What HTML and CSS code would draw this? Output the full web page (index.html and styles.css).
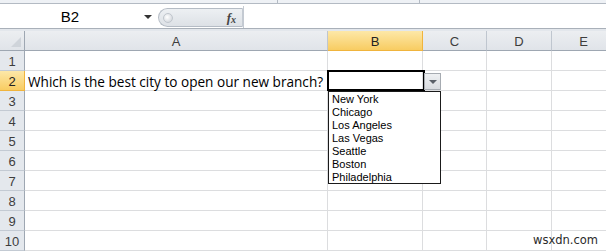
FILE: index.html
```html
<!DOCTYPE html>
<html lang="en">
<head>
    <meta charset="UTF-8">
    <title>Data Validation List</title>
    <link rel="stylesheet" href="styles.css">
</head>
<body>
    <div class="ribbon-edge">
        <span class="edge-mark mark-1"></span>
        <span class="edge-mark mark-2"></span>
    </div>

    <div class="formula-bar">
        <div class="name-box">
            <span class="name-text">B2</span>
            <span class="name-arrow"></span>
        </div>
        <div class="fx-pill">
            <span class="splitter"></span>
            <span class="fx">f<sub>x</sub></span>
        </div>
        <div class="formula-input"></div>
    </div>
    <div class="bar-gap"></div>

    <div class="sheet">
        <div class="grid">
            <div class="hdr corner"><span class="corner-tri"></span></div>
            <div class="hdr col">A</div>
            <div class="hdr col active">B</div>
            <div class="hdr col">C</div>
            <div class="hdr col">D</div>
            <div class="hdr col">E</div>

            <div class="hdr row">1</div>
            <div class="cell"></div><div class="cell"></div><div class="cell"></div><div class="cell"></div><div class="cell"></div>

            <div class="hdr row active">2</div>
            <div class="cell text">Which is the best city to open our new branch?</div>
            <div class="cell"></div><div class="cell"></div><div class="cell"></div><div class="cell"></div>

            <div class="hdr row">3</div>
            <div class="cell"></div><div class="cell"></div><div class="cell"></div><div class="cell"></div><div class="cell"></div>
            <div class="hdr row">4</div>
            <div class="cell"></div><div class="cell"></div><div class="cell"></div><div class="cell"></div><div class="cell"></div>
            <div class="hdr row">5</div>
            <div class="cell"></div><div class="cell"></div><div class="cell"></div><div class="cell"></div><div class="cell"></div>
            <div class="hdr row">6</div>
            <div class="cell"></div><div class="cell"></div><div class="cell"></div><div class="cell"></div><div class="cell"></div>
            <div class="hdr row">7</div>
            <div class="cell"></div><div class="cell"></div><div class="cell"></div><div class="cell"></div><div class="cell"></div>
            <div class="hdr row">8</div>
            <div class="cell"></div><div class="cell"></div><div class="cell"></div><div class="cell"></div><div class="cell"></div>
            <div class="hdr row">9</div>
            <div class="cell"></div><div class="cell"></div><div class="cell"></div><div class="cell"></div><div class="cell"></div>
            <div class="hdr row">10</div>
            <div class="cell"></div><div class="cell"></div><div class="cell"></div><div class="cell"></div><div class="cell"></div>
        </div>

        <!-- active cell, its dropdown button and the open list sit over the grid -->
        <div class="active-cell"></div>
        <div class="drop-btn"><span class="drop-tri"></span></div>
        <ul class="drop-list">
            <li>New York</li>
            <li>Chicago</li>
            <li>Los Angeles</li>
            <li>Las Vegas</li>
            <li>Seattle</li>
            <li>Boston</li>
            <li>Philadelphia</li>
        </ul>

        <div class="watermark">wsxdn.com</div>
    </div>
</body>
</html>
```

FILE: styles.css
```css
/* Excel 2010 style sheet view */
body {
    margin: 0;
    width: 606px;
    height: 251px;
    overflow: hidden;
    background: #ffffff;
    font-family: 'Liberation Sans', Arial, sans-serif;
}

.ribbon-edge {
    position: relative;
    height: 3px;
    background: #eef1f5;
    border-bottom: 1px solid #b3bac3;
}

.edge-mark {
    position: absolute;
    top: 0;
    width: 1px;
    height: 3px;
    background: #b3bac3;
}

.mark-1 { left: 277px; }
.mark-2 { left: 419px; }

.formula-bar {
    display: flex;
    height: 24px;
    background: #ffffff;
    border-bottom: 1px solid #a9b0b9;
}

.name-box {
    width: 158px;
    display: flex;
    align-items: center;
    position: relative;
}

.name-text {
    width: 140px;
    text-align: center;
    font-size: 15px;
    color: #000;
}

.name-arrow {
    width: 0;
    height: 0;
    border-left: 4px solid transparent;
    border-right: 4px solid transparent;
    border-top: 4px solid #333;
    margin-left: 4px;
    margin-top: 2px;
}

.fx-pill {
    width: 85px;
    margin-top: 4px;
    height: 19px;
    display: flex;
    align-items: center;
    justify-content: space-between;
    background: linear-gradient(#edf0f3, #dde1e6);
    border: 1px solid #b5bcc5;
    border-right: 1px solid #c4cad2;
    border-radius: 10px 0 0 10px;
    box-sizing: border-box;
    padding: 0 6px 0 4px;
}

.splitter {
    width: 8px;
    height: 8px;
    border-radius: 50%;
    background: radial-gradient(circle at 40% 40%, #ffffff, #c9ced5);
    border: 1px solid #c0c6cd;
}

.fx {
    font-family: 'Liberation Serif', 'Times New Roman', serif;
    font-style: italic;
    font-weight: bold;
    font-size: 13px;
    color: #444;
}

.fx sub {
    font-size: 10px;
    vertical-align: -1px;
}

.formula-input {
    flex: 1;
    margin-top: 2px;
    border-left: 1px solid #c4cad2;
}

.bar-gap {
    height: 2px;
    background: #e3e7ec;
}

.sheet {
    position: relative;
}

.grid {
    display: grid;
    grid-template-columns: 25px 303px 95px 64px 65px 64px;
    grid-auto-rows: 20px;
}

.hdr {
    box-sizing: border-box;
    display: flex;
    align-items: center;
    justify-content: center;
    font-size: 13px;
    color: #3d3d3d;
    background: linear-gradient(#eceef1, #e0e4e9);
}

.hdr.col {
    border-right: 1px solid #bfc6cf;
    border-bottom: 1px solid #9ea7b2;
    padding-top: 1px;
}

.hdr.row {
    border-right: 1px solid #9ea7b2;
    border-bottom: 1px solid #c3cad3;
    background: #e4e8ed;
    padding-top: 1px;
}

.hdr.corner {
    position: relative;
    border-right: 1px solid #9ea7b2;
    border-bottom: 1px solid #9ea7b2;
}

.corner-tri {
    position: absolute;
    right: 3px;
    bottom: 3px;
    width: 0;
    height: 0;
    border-left: 10px solid transparent;
    border-bottom: 10px solid #cfd4da;
}

.hdr.active {
    background: linear-gradient(#fde8a8, #f8cc62);
    border-right-color: #f0b43d;
    border-bottom-color: #f0b43d;
    color: #222;
}

.cell {
    box-sizing: border-box;
    border-right: 1px solid #dcdddf;
    border-bottom: 1px solid #dcdddf;
}

.cell.text {
    font-family: 'Open Sans', 'Liberation Sans', sans-serif;
    font-size: 13.6px;
    color: #000;
    white-space: nowrap;
    padding: 1px 0 0 3px;
}

.active-cell {
    position: absolute;
    left: 327px;
    top: 39px;
    width: 98px;
    height: 21px;
    box-sizing: border-box;
    border: 2px solid #000;
}

.drop-btn {
    position: absolute;
    left: 424px;
    top: 42px;
    width: 17px;
    height: 17px;
    box-sizing: border-box;
    border: 1px solid #a6abb1;
    background: linear-gradient(#eef0f2, #d9dce0);
    display: flex;
    align-items: center;
    justify-content: center;
}

.drop-tri {
    width: 0;
    height: 0;
    border-left: 4px solid transparent;
    border-right: 4px solid transparent;
    border-top: 4px solid #5a6068;
}

.drop-list {
    position: absolute;
    left: 328px;
    top: 60px;
    width: 113px;
    height: 93px;
    box-sizing: border-box;
    margin: 0;
    padding: 1px 0 0 3px;
    list-style: none;
    background: #ffffff;
    border: 1px solid #1a1a1a;
    font-size: 11px;
    color: #000;
}

.drop-list li {
    height: 13px;
    line-height: 13px;
}

.watermark {
    position: absolute;
    left: 533px;
    top: 202px;
    font-family: 'DejaVu Sans', Verdana, sans-serif;
    font-size: 11.5px;
    color: #2a2a2a;
}
```
